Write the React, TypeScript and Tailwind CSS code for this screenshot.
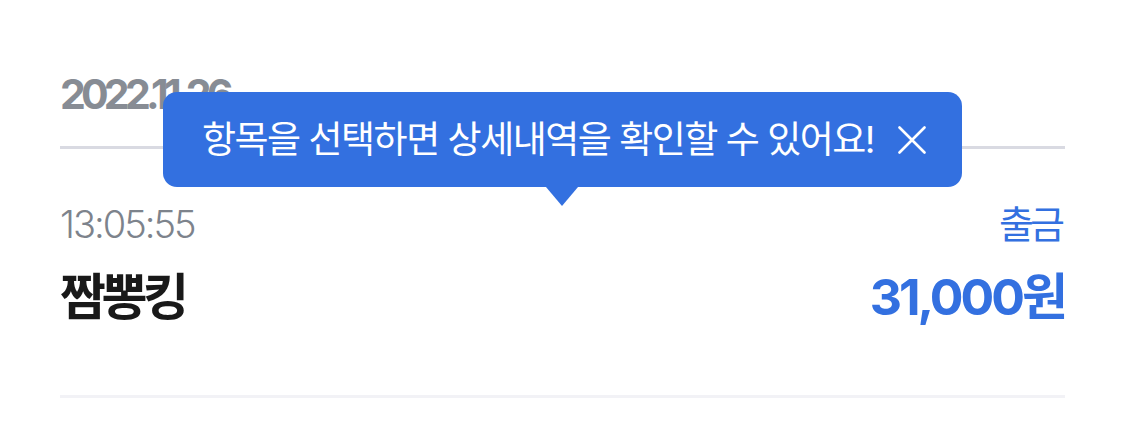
export default function App() {
  return (
    <div className="relative h-[444px] w-full bg-white px-[60px] font-['Inter','Noto_Sans_CJK_KR',sans-serif]">
      {/* 날짜 헤더 */}
      <div className="pt-[74px] border-b-[3px] border-[#d9dae2] pb-[31px]">
        <h2 className="text-[41px] font-bold leading-none tracking-[-4.8px] text-[#878c94]">2022.11.26</h2>
      </div>

      {/* 거래 항목 */}
      <div className="border-b-[3px] border-[#f2f2f6] pt-[56px] pb-[73px]">
        <div className="flex items-center justify-between">
          <span className="text-[38px] font-light leading-none tracking-[-2px] text-[#7d838c]">13:05:55</span>
          <span className="mr-[4px] text-[38px] leading-none tracking-[-4px] text-[#3370e0]">출금</span>
        </div>
        <div className="mt-[29px] flex items-center justify-between">
          <span className="text-[50px] font-bold leading-none tracking-[-4.5px] text-[#191919]">짬뽕킹</span>
          <span className="text-[50px] font-bold leading-none tracking-[-3px] text-[#3370e0]">31,000원</span>
        </div>
      </div>

      {/* 안내 툴팁 */}
      <div className="absolute left-[163px] top-[92px] flex h-[95px] w-[799px] items-center justify-between rounded-[14px] bg-[#3370e0] pl-[39px] pr-[36px]">
        <span className="text-[37px] leading-none tracking-[-1.5px] text-white">
          항목을 선택하면 상세내역을 확인할 수 있어요!
        </span>
        <svg width="28" height="28" viewBox="0 0 28 28" fill="none" stroke="white" strokeWidth="2.6" strokeLinecap="round">
          <path d="M1.5 1.5 L26.5 26.5 M26.5 1.5 L1.5 26.5" />
        </svg>
        <div className="absolute left-[383px] top-full h-0 w-0 border-x-[16px] border-t-[19px] border-x-transparent border-t-[#3370e0]" />
      </div>
    </div>
  )
}
